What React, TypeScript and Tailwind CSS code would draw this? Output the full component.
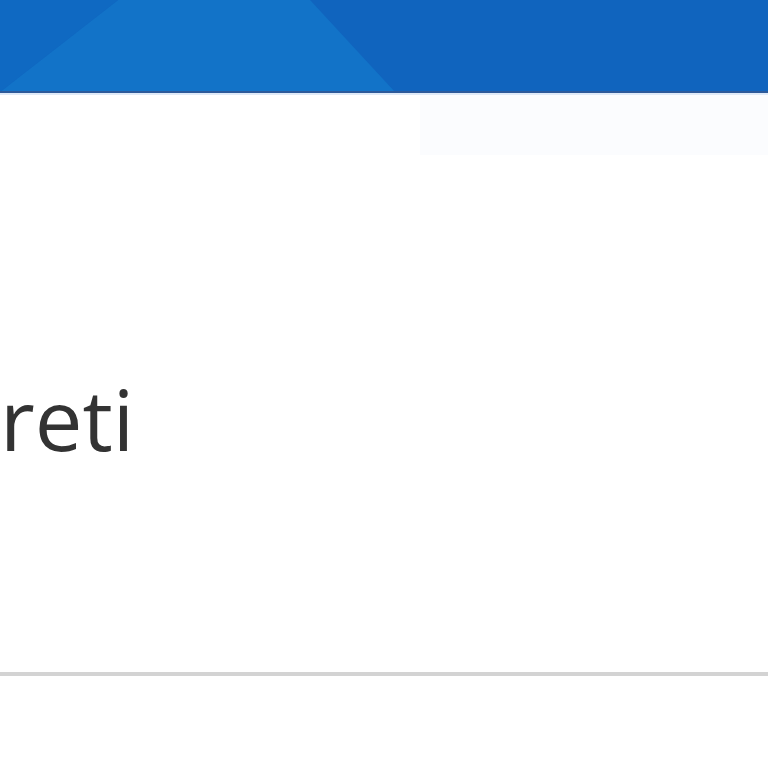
import React from "react";

export default function App() {
  return (
    <div className="w-[768px] h-[768px] bg-white overflow-hidden flex flex-col" style={{ fontFamily: '"Open Sans", sans-serif' }}>
      <header className="relative h-[93px] bg-[#1064be] border-b-2 border-[#2d5a9a] overflow-hidden shrink-0">
        <svg className="absolute inset-0" width="768" height="92" viewBox="0 0 768 92">
          <polygon points="118,0 310,0 395,92 0,92" fill="#1273c8" />
          <polygon points="0,0 118,0 0,92" fill="#0f69c2" />
        </svg>
      </header>
      <div className="h-[2px] bg-[#dfeaf8] shrink-0" />
      <div className="h-[60px] shrink-0 flex">
        <div className="w-[420px] bg-white" />
        <div className="flex-1 bg-[#fbfcfe]" />
      </div>
      <main className="flex-1 flex flex-col">
        <div className="h-[221px]" />
        <div className="text-[85px] leading-none text-[#333333] pl-0">reti</div>
        <div className="flex-1" />
      </main>
      <div className="h-[4px] bg-[#d3d3d3] shrink-0" />
      <div className="h-[92px] shrink-0 bg-white" />
    </div>
  );
}
